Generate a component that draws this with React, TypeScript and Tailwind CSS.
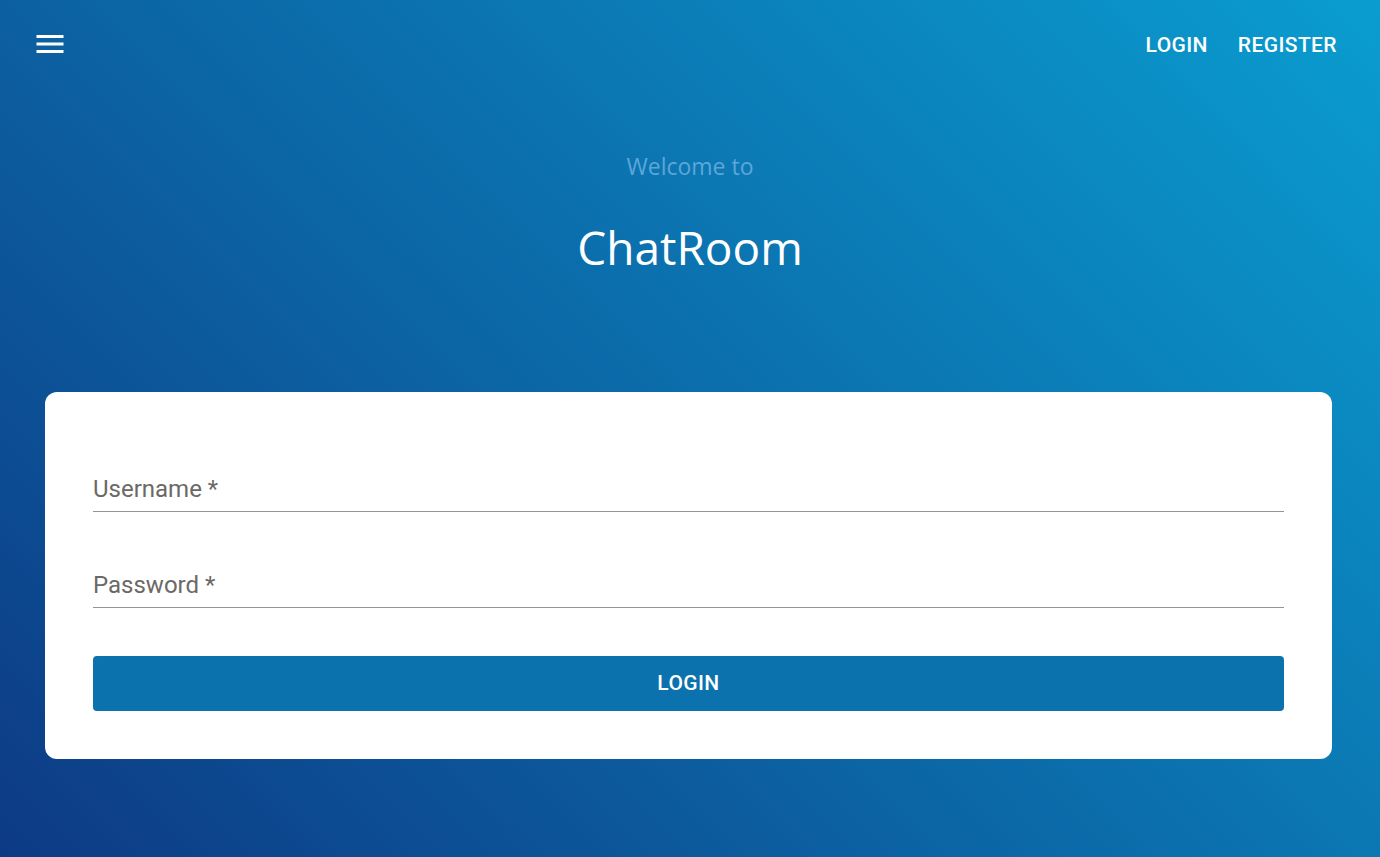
import React from "react";

export default function App() {
  return (
    <div
      className="w-full h-[857px] overflow-hidden bg-[linear-gradient(45deg,#0d3a84,#0a9dd0)]"
      style={{ fontFamily: "Roboto, 'Liberation Sans', sans-serif" }}
    >
      <header className="flex items-center justify-between h-[88px] pl-[32px] pr-[43px]">
        <svg width="36" height="36" viewBox="0 0 24 24" fill="#ffffff">
          <path d="M3 18h18v-2H3v2zm0-5h18v-2H3v2zm0-7v2h18V6H3z" />
        </svg>
        <nav className="flex items-center gap-[30px] text-white text-[21px] leading-[24px] font-medium tracking-[0.4px] pt-[2px]">
          <span>LOGIN</span>
          <span>REGISTER</span>
        </nav>
      </header>

      <div className="flex flex-col items-center" style={{ fontFamily: "'Open Sans', 'Noto Sans', sans-serif" }}>
        <div className="mt-[63px] text-[23px] leading-[30px] text-[#5ea6d8]">Welcome to</div>
        <div className="mt-[36px] text-[46px] leading-[60px] text-white">ChatRoom</div>
      </div>

      <div className="mt-[115px] ml-[45px] w-[1287px] bg-white rounded-[12px] px-[48px] pt-[83px] pb-[48px]">
        <div className="text-[24px] leading-[28px] text-[#6b6966] pb-[8px] border-b border-[#949494]">
          Username *
        </div>
        <div className="mt-[59px] text-[24px] leading-[28px] text-[#6b6966] pb-[8px] border-b border-[#949494]">
          Password *
        </div>
        <button className="mt-[48px] w-full h-[55px] rounded-[4px] bg-[#0b72ae] text-white text-[21px] font-medium tracking-[0.4px] flex items-center justify-center">
          LOGIN
        </button>
      </div>
    </div>
  );
}
